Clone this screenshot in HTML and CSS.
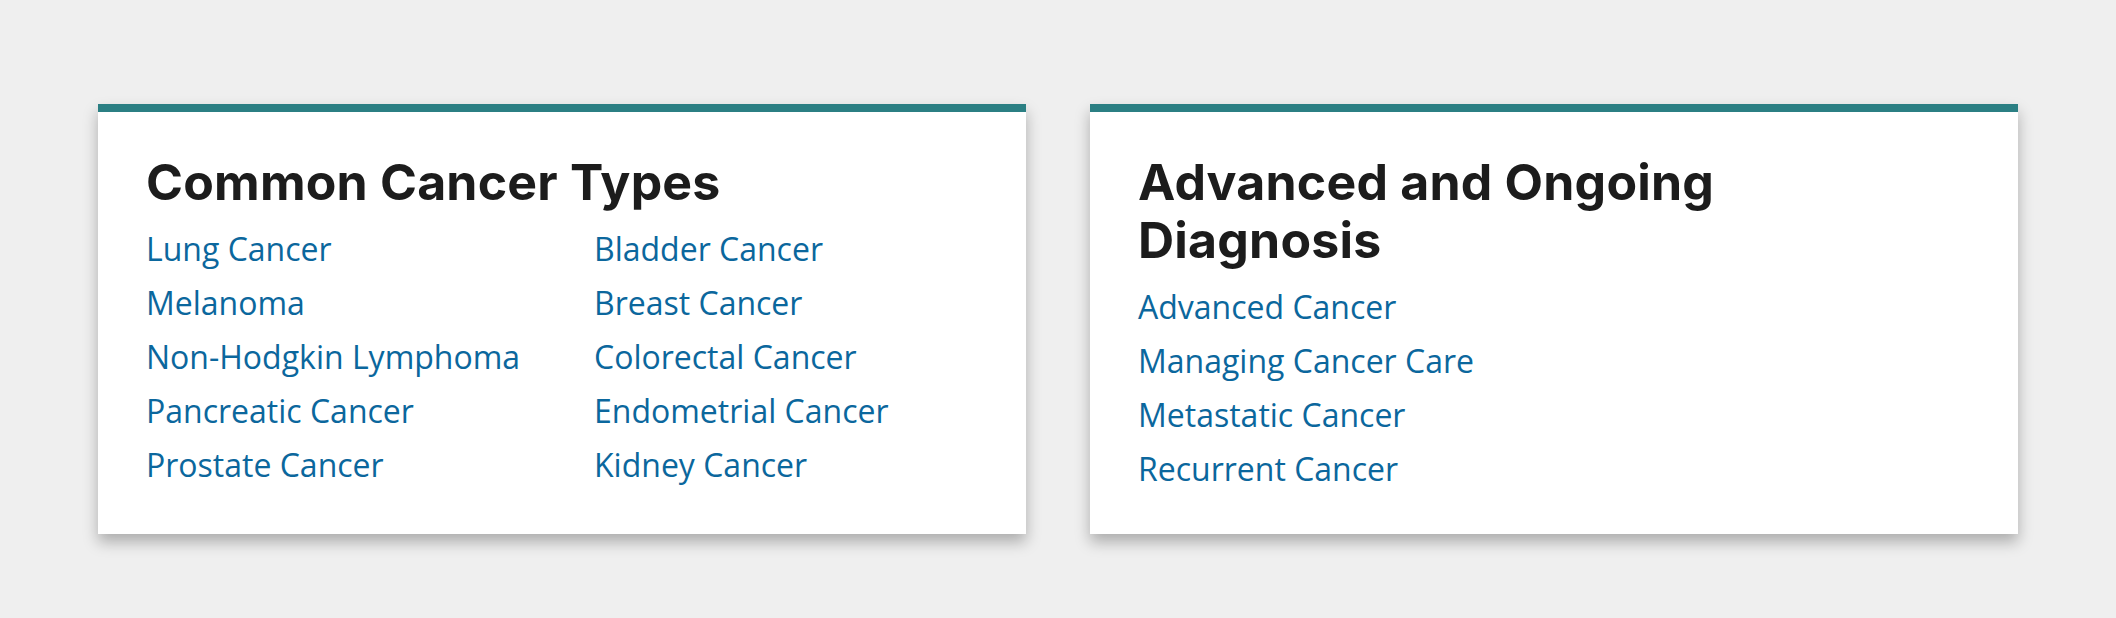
FILE: index.html
```html
<!DOCTYPE html>
<html lang="en">
<head>
<meta charset="utf-8">
<title>Cancer Types</title>
<link rel="stylesheet" href="styles.css">
</head>
<body>
<main class="cards">
  <section class="card">
    <h2 class="card-title">Common Cancer Types</h2>
    <ul class="link-list two-col">
      <li><a href="#">Lung Cancer</a></li>
      <li><a href="#">Bladder Cancer</a></li>
      <li><a href="#">Melanoma</a></li>
      <li><a href="#">Breast Cancer</a></li>
      <li><a href="#">Non-Hodgkin Lymphoma</a></li>
      <li><a href="#">Colorectal Cancer</a></li>
      <li><a href="#">Pancreatic Cancer</a></li>
      <li><a href="#">Endometrial Cancer</a></li>
      <li><a href="#">Prostate Cancer</a></li>
      <li><a href="#">Kidney Cancer</a></li>
    </ul>
  </section>
  <section class="card">
    <h2 class="card-title">Advanced and Ongoing Diagnosis</h2>
    <ul class="link-list">
      <li><a href="#">Advanced Cancer</a></li>
      <li><a href="#">Managing Cancer Care</a></li>
      <li><a href="#">Metastatic Cancer</a></li>
      <li><a href="#">Recurrent Cancer</a></li>
    </ul>
  </section>
</main>
</body>
</html>
```

FILE: styles.css
```css
html, body {
  margin: 0;
  padding: 0;
  background: #efefef;
}

body {
  font-family: "Open Sans", "Noto Sans", sans-serif;
  min-height: 618px;
}

.cards {
  width: 1920px;
  margin: 0 auto;
  padding: 104px 0 84px;
  display: grid;
  grid-template-columns: 1fr 1fr;
  column-gap: 64px;
  align-items: stretch;
}

.card {
  background: #ffffff;
  border-top: 8px solid #2b7f83;
  box-shadow: 0 8px 14px rgba(0, 0, 0, 0.28);
  padding: 41px 48px 38px;
}

.card-title {
  margin: 0 0 11px;
  max-width: 660px;
  font-family: Inter, "Noto Sans", sans-serif;
  font-weight: 700;
  font-size: 50px;
  line-height: 58px;
  letter-spacing: 0.2px;
  color: #1c1c1c;
}

.link-list {
  list-style: none;
  margin: 0;
  padding: 0;
}

.link-list.two-col {
  display: grid;
  grid-template-columns: 448px auto;
}

.link-list li {
  font-size: 32px;
  line-height: 54px;
}

.link-list a {
  color: #0b679d;
  text-decoration: none;
}
```
